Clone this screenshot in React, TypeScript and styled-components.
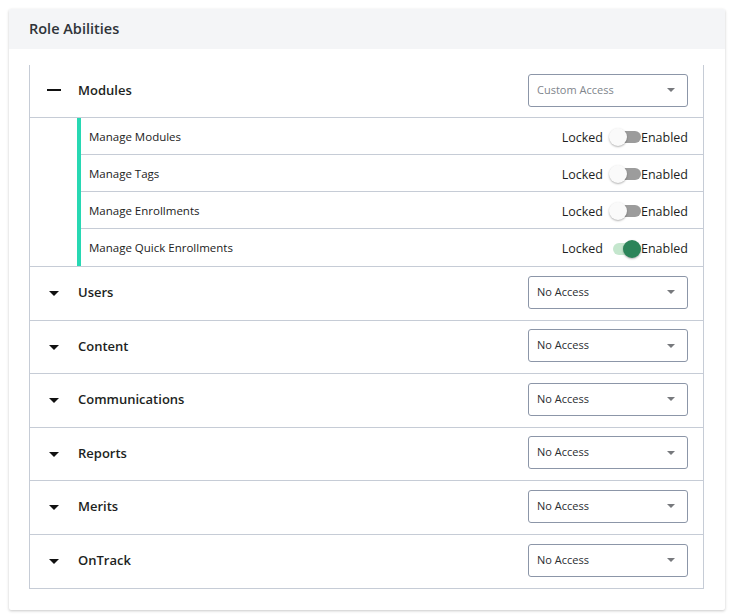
import { useState } from 'react';
import styled, { createGlobalStyle } from 'styled-components';

const GlobalStyle = createGlobalStyle`
  body {
    margin: 0;
    background: #ffffff;
    font-family: "Open Sans", "Noto Sans", sans-serif;
    color: #222;
  }
`;

const Page = styled.div`
  padding: 9px 8px 8px 9px;
`;

const Card = styled.div`
  width: 716px;
  background: #fff;
  box-shadow: 0 1px 3px rgba(0, 0, 0, 0.22);
  border-radius: 2px;
  overflow: hidden;
`;

const CardHeader = styled.div`
  box-sizing: border-box;
  height: 40px;
  background: #f4f5f7;
  display: flex;
  align-items: center;
  padding-left: 20px;
  padding-bottom: 2px;
  font-size: 14.5px;
  font-weight: 600;
  color: #2f3338;
`;

const CardBody = styled.div`
  padding: 16px 21px 21px 20px;
`;

const List = styled.div`
  border: 1px solid #c6ccd6;
  border-top: none;
`;

const Row = styled.div<{ $h: number }>`
  box-sizing: border-box;
  height: ${p => p.$h}px;
  display: flex;
  align-items: center;
  border-bottom: 1px solid #c6ccd6;
  padding-right: 15px;
  padding-bottom: 2px;
  &:last-child {
    border-bottom: none;
  }
`;

const IconCell = styled.div`
  width: 48px;
  display: flex;
  justify-content: center;
`;

const Minus = styled.span`
  display: block;
  width: 14px;
  height: 2px;
  background: #111;
`;

const Caret = styled.span`
  display: block;
  width: 0;
  height: 0;
  border-left: 5px solid transparent;
  border-right: 5px solid transparent;
  border-top: 5px solid #111;
  margin-top: 3px;
`;

const RowLabel = styled.div`
  flex: 1;
  font-size: 13px;
  font-weight: 600;
  color: #1d1f22;
`;

const Select = styled.div<{ $muted?: boolean }>`
  box-sizing: border-box;
  width: 160px;
  height: 33px;
  border: 1px solid #8c96a8;
  border-radius: 3px;
  display: flex;
  align-items: center;
  justify-content: space-between;
  padding: 0 12px 2px 8px;
  font-size: 11px;
  color: ${p => (p.$muted ? '#80858c' : '#2a2d31')};
`;

const SelectCaret = styled.span`
  width: 0;
  height: 0;
  margin-top: 2px;
  border-left: 4px solid transparent;
  border-right: 4px solid transparent;
  border-top: 4px solid #77797d;
`;

const SubGroup = styled.div`
  border-bottom: 1px solid #c6ccd6;
`;

const SubList = styled.div`
  margin-left: 47px;
  border-left: 4px solid #27d8b3;
`;

const SubRow = styled.div`
  box-sizing: border-box;
  height: 37px;
  display: flex;
  align-items: center;
  padding-left: 8px;
  padding-right: 15px;
  border-bottom: 1px solid #c6ccd6;
  &:last-child {
    border-bottom: none;
  }
`;

const SubLabel = styled.div`
  flex: 1;
  font-size: 11.5px;
  color: #222;
`;

const ToggleWrap = styled.div`
  display: flex;
  align-items: center;
  padding-top: 2px;
  font-size: 12.5px;
  color: #1d1f22;
`;

const LockedText = styled.span`
  margin-right: 6px;
`;

const Switch = styled.button<{ $on: boolean }>`
  position: relative;
  width: 32px;
  height: 18px;
  border: none;
  padding: 0;
  background: transparent;
  cursor: pointer;
  &::before {
    content: '';
    position: absolute;
    left: 4px;
    right: 0;
    top: 3px;
    height: 12px;
    border-radius: 6px;
    background: ${p => (p.$on ? '#c4e6cd' : '#9c9c9c')};
  }
  &::after {
    content: '';
    position: absolute;
    top: 0;
    left: ${p => (p.$on ? '14px' : '0')};
    width: 18px;
    height: 18px;
    border-radius: 50%;
    background: ${p => (p.$on ? '#2b8459' : '#fafafa')};
    box-shadow: 0 1px 2px rgba(0, 0, 0, 0.3);
  }
`;

const abilities = [
  { name: 'Manage Modules', on: false },
  { name: 'Manage Tags', on: false },
  { name: 'Manage Enrollments', on: false },
  { name: 'Manage Quick Enrollments', on: true },
];

const sections = ['Users', 'Content', 'Communications', 'Reports', 'Merits', 'OnTrack'];

const App = () => {
  const [toggles, setToggles] = useState<boolean[]>(abilities.map(a => a.on));

  const flip = (i: number) => {
    setToggles(t => t.map((v, j) => (j === i ? !v : v)));
  };

  return (
    <Page>
      <GlobalStyle />
      <Card>
        <CardHeader>Role Abilities</CardHeader>
        <CardBody>
          <List>
            <Row $h={53}>
              <IconCell>
                <Minus />
              </IconCell>
              <RowLabel>Modules</RowLabel>
              <Select $muted>
                Custom Access
                <SelectCaret />
              </Select>
            </Row>
            <SubGroup>
              <SubList>
                {abilities.map((a, i) => (
                  <SubRow key={a.name}>
                    <SubLabel>{a.name}</SubLabel>
                    <ToggleWrap>
                      <LockedText>Locked</LockedText>
                      <Switch $on={toggles[i]} onClick={() => flip(i)} />
                      <span>Enabled</span>
                    </ToggleWrap>
                  </SubRow>
                ))}
              </SubList>
            </SubGroup>
            {sections.map(s => (
              <Row key={s} $h={53.5}>
                <IconCell>
                  <Caret />
                </IconCell>
                <RowLabel>{s}</RowLabel>
                <Select>
                  No Access
                  <SelectCaret />
                </Select>
              </Row>
            ))}
          </List>
        </CardBody>
      </Card>
    </Page>
  );
};

export default App;
